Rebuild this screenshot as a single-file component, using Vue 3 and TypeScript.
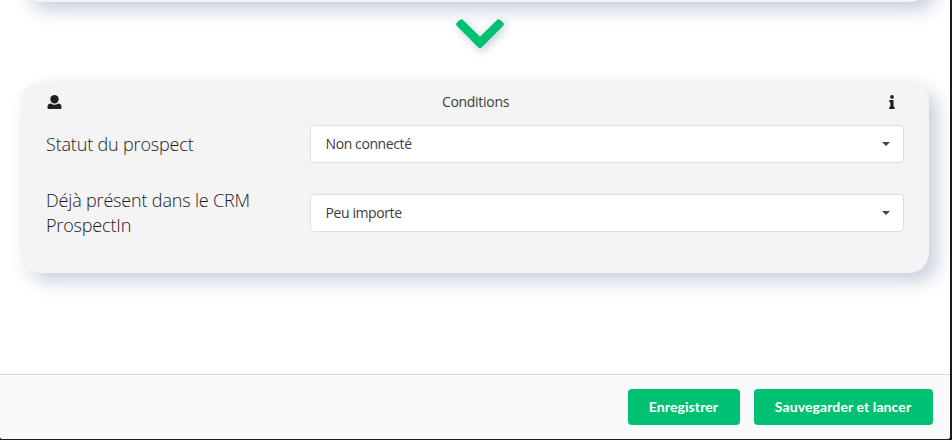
<script setup lang="ts">
interface Condition {
  id: string
  label: string
  value: string
}

const conditions: Condition[] = [
  { id: 'status', label: 'Statut du prospect', value: 'Non connecté' },
  { id: 'crm', label: 'Déjà présent dans le CRM ProspectIn', value: 'Peu importe' },
]
const actions: string[] = ['Enregistrer', 'Sauvegarder et lancer']
</script>

<template>
  <div class="frame">
    <div class="modal">
      <main class="content">
        <div class="card previous"></div>
        <div class="arrow">
          <svg width="48" height="30" viewBox="0 0 48 30">
            <path d="M7 1 24 17.8 41 1Q42.7-.5 44.4 1L47 3.6Q48.7 5.3 47 7L25.6 28.6Q24 30.1 22.4 28.6L1 7Q-.7 5.3 1 3.6L3.6 1Q5.3-.5 7 1Z" fill="#00c073" />
          </svg>
        </div>
        <section class="card">
          <header class="card-head">
            <svg class="user" width="15" height="14" viewBox="0 0 15 14">
              <circle cx="7.5" cy="4.2" r="4.2" fill="#1f1f1f" />
              <path d="M3.6 8.6Q7.5 11.1 11.4 8.6Q14.5 8.9 14.5 12V12.8Q14.5 14 13.3 14H1.7Q.5 14 .5 12.8V12Q.5 8.9 3.6 8.6Z" fill="#1f1f1f" />
            </svg>
            <h2 class="title">Conditions</h2>
            <svg class="info" width="6" height="14" viewBox="0 0 6 14">
              <circle cx="3" cy="1.9" r="1.9" fill="#1f1f1f" />
              <path d="M.3 5H4.5V11.7H5.6V14H.3V11.7H1.4V7.2H.3Z" fill="#1f1f1f" />
            </svg>
          </header>
          <div v-for="item in conditions" :key="item.id" class="row" :class="item.id">
            <span class="label">{{ item.label }}</span>
            <div class="select" role="listbox">
              <span>{{ item.value }}</span>
              <svg width="8" height="4" viewBox="0 0 8 4"><path d="M0 0H8L4 4Z" fill="#444" /></svg>
            </div>
          </div>
        </section>
      </main>
      <footer class="actions">
        <button v-for="action in actions" :key="action" type="button">{{ action }}</button>
      </footer>
    </div>
  </div>
</template>

<style>
body {
  margin: 0;
}
</style>

<style scoped>
* {
  box-sizing: border-box;
}
.frame {
  width: 952px;
  height: 440px;
  padding: 0 2px 1px 0;
  background: #1b1c1d;
  overflow: hidden;
}
.modal {
  display: flex;
  flex-direction: column;
  height: 439px;
  border-radius: 0 0 3px 3px;
  background: #fff;
  overflow: hidden;
}
.content {
  flex: 1;
  min-height: 0;
  padding: 0 21px;
  font-family: 'Open Sans', 'Noto Sans', sans-serif;
  font-weight: 300;
  color: #1a1a1a;
  overflow: hidden;
}
.card {
  width: 908px;
  height: 191px;
  padding: 0 25px;
  border-radius: 20px;
  background: #f4f4f4;
  box-shadow: 8px 8px 19px #c6cedb;
}
.card.previous {
  margin-top: -189px;
}
.arrow {
  display: flex;
  justify-content: center;
  height: 80px;
  padding: 17px 0 0 10px;
}
.arrow svg {
  overflow: visible;
  filter: drop-shadow(2px 3px 5px #c3ccdb);
}
.card-head {
  display: flex;
  align-items: center;
  justify-content: space-between;
  height: 43px;
  padding: 0 9px 3px 1px;
}
.title {
  margin: 0;
  font-size: 14px;
  line-height: 20px;
  font-weight: 400;
  letter-spacing: -0.3px;
  color: #3c3c3c;
}
.row {
  display: grid;
  grid-template-columns: 264px 594px;
  align-items: center;
  height: 38px;
}
.row.crm {
  height: 50px;
  margin-top: 25px;
}
.label {
  width: 240px;
  font-size: 18px;
  line-height: 25px;
  letter-spacing: -0.17px;
}
.select {
  display: flex;
  align-items: center;
  justify-content: space-between;
  height: 38px;
  padding: 0 13px 0 14.5px;
  border: 1px solid #dededf;
  border-radius: 4px;
  background: #fff;
  color: #3c3c3c;
  font-size: 14px;
  font-weight: 400;
  letter-spacing: -0.4px;
}
.select span {
  padding-bottom: 1px;
}
.actions {
  display: flex;
  justify-content: flex-end;
  gap: 14px;
  height: 65px;
  padding: 14px 17px 0 0;
  border-top: 1px solid #d9dadc;
  background: #f9fafb;
}
button {
  width: 112px;
  height: 36px;
  padding: 0 1px 0 0;
  border: 0;
  border-radius: 4px;
  background: #00c073;
  color: #fff;
  font: 700 14px/14px Lato, sans-serif;
  letter-spacing: 0.1px;
}
button:last-child {
  width: 179px;
}
</style>
